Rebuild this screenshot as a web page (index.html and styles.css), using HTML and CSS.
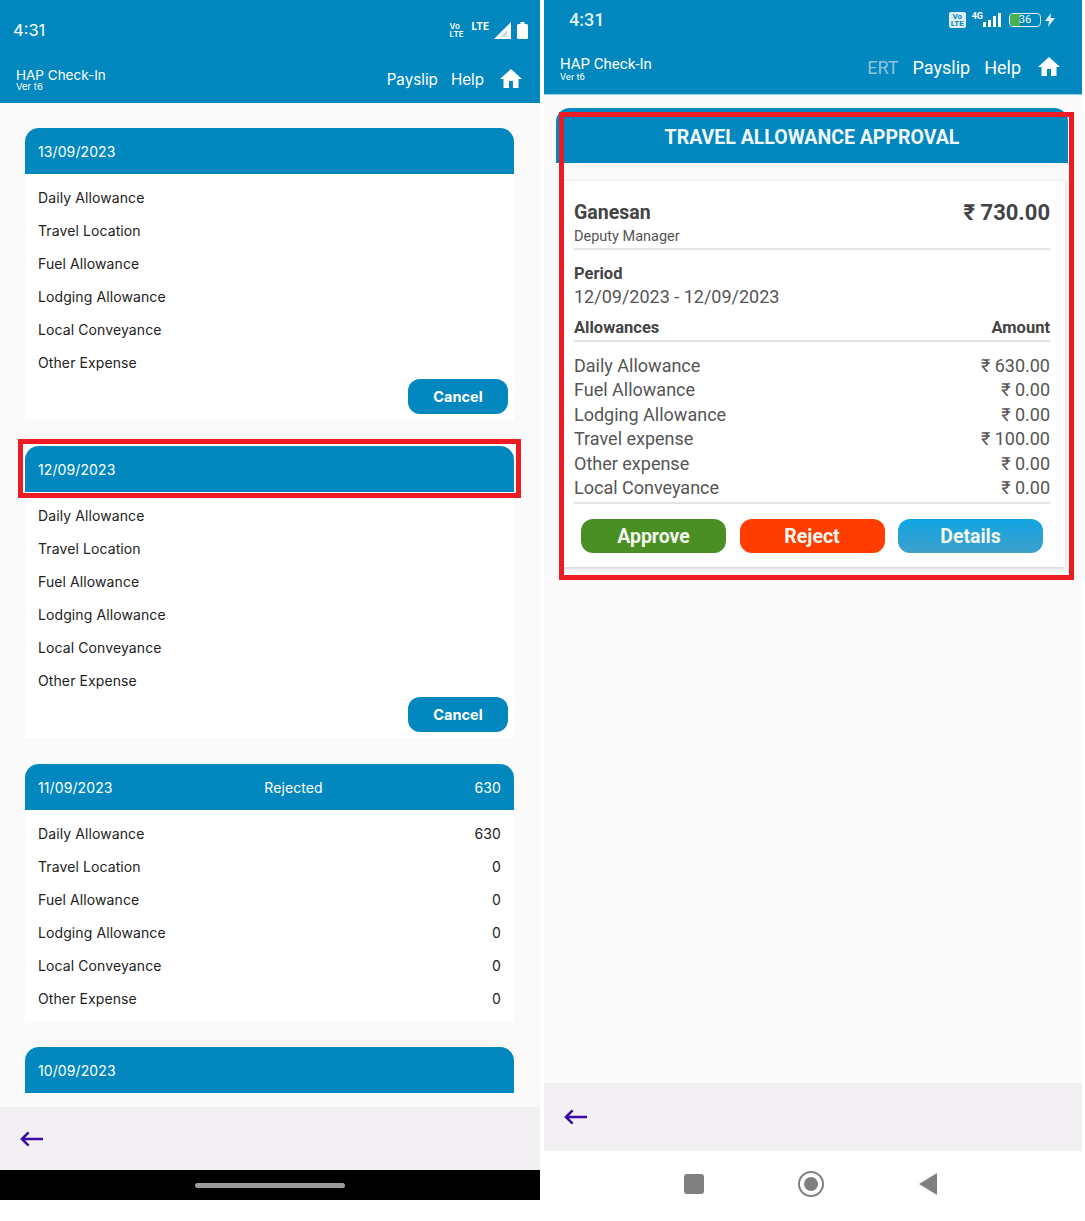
FILE: index.html
```html
<!DOCTYPE html>
<html lang="en">
<head>
    <meta charset="UTF-8">
    <title>HAP Check-In</title>
    <link rel="stylesheet" href="styles.css">
</head>
<body>
    <div class="screens">
        <!-- left phone: date list -->
        <section class="phone phone-list">
            <header class="topbar">
                <div class="status">
                    <span class="time">4:31</span>
                    <div class="status-icons">
                        <span class="volte">Vo<br>LTE</span>
                        <span class="lte">LTE</span>
                        <svg width="18" height="17" viewBox="0 0 18 17"><path d="M17 0v17H0z" fill="#fff"/><path d="M13 8v7H6z" fill="#0288be" opacity=".25"/></svg>
                        <svg class="batt" width="11" height="17" viewBox="0 0 11 17"><path d="M3.500 0h4v2h2a1.500 1.500 0 0 1 1.500 1.500v12a1.500 1.500 0 0 1-1.500 1.500h-8a1.500 1.500 0 0 1-1.500-1.500v-12a1.500 1.500 0 0 1 1.500-1.500h2z" fill="#fff"/></svg>
                    </div>
                </div>
                <div class="appbar">
                    <div class="brand">
                        <div class="brand-name">HAP Check-In</div>
                        <div class="brand-ver">Ver t6</div>
                    </div>
                    <nav class="links">
                        <a>Payslip</a>
                        <a>Help</a>
                        <svg class="home" viewBox="0 0 24 24"><path d="M10 21v-7h4v7h5.500v-9H23L12 2 1 12h3.500v9z" fill="#fff"/></svg>
                    </nav>
                </div>
            </header>

            <main class="list">
                <div class="day">
                    <div class="day-head"><span>13/09/2023</span></div>
                    <div class="day-body">
                        <div class="row"><span>Daily Allowance</span></div>
                        <div class="row"><span>Travel Location</span></div>
                        <div class="row"><span>Fuel Allowance</span></div>
                        <div class="row"><span>Lodging Allowance</span></div>
                        <div class="row"><span>Local Conveyance</span></div>
                        <div class="row"><span>Other Expense</span></div>
                        <div class="day-actions"><button class="btn-cancel">Cancel</button></div>
                    </div>
                </div>
                <div class="day">
                    <div class="day-head"><span>12/09/2023</span></div>
                    <div class="day-body">
                        <div class="row"><span>Daily Allowance</span></div>
                        <div class="row"><span>Travel Location</span></div>
                        <div class="row"><span>Fuel Allowance</span></div>
                        <div class="row"><span>Lodging Allowance</span></div>
                        <div class="row"><span>Local Conveyance</span></div>
                        <div class="row"><span>Other Expense</span></div>
                        <div class="day-actions"><button class="btn-cancel">Cancel</button></div>
                    </div>
                </div>
                <div class="day">
                    <div class="day-head day-head-split"><span>11/09/2023</span><span>Rejected</span><span>630</span></div>
                    <div class="day-body">
                        <div class="row"><span>Daily Allowance</span><span>630</span></div>
                        <div class="row"><span>Travel Location</span><span>0</span></div>
                        <div class="row"><span>Fuel Allowance</span><span>0</span></div>
                        <div class="row"><span>Lodging Allowance</span><span>0</span></div>
                        <div class="row"><span>Local Conveyance</span><span>0</span></div>
                        <div class="row"><span>Other Expense</span><span>0</span></div>
                    </div>
                </div>
                <div class="day">
                    <div class="day-head"><span>10/09/2023</span></div>
                </div>
            </main>

            <footer class="backbar">
                <svg class="back" viewBox="0 0 26 18"><path d="M25 9H3M10 2 3 9l7 7" fill="none" stroke="#3a0ca3" stroke-width="2.600"/></svg>
            </footer>
            <div class="gesture"><span class="gesture-pill"></span></div>
            <div class="mark mark-day"></div>
        </section>

        <!-- right phone: approval -->
        <section class="phone phone-approval">
            <header class="topbar">
                <div class="status">
                    <span class="time">4:31</span>
                    <div class="status-icons">
                        <span class="volte-box">Vo<br>LTE</span>
                        <span class="net">4G</span>
                        <svg width="20" height="14" viewBox="0 0 20 14"><path d="M0 9h3v5H0zM5 7h3v7H5zM10 3h3v11h-3zM15 0h3v14h-3z" fill="#fff"/></svg>
                        <span class="battery"><span class="battery-fill"></span><span class="battery-num">36</span></span>
                        <svg width="10" height="14" viewBox="0 0 10 14"><path d="M6 0 0 8h4l-1 6 7-9H5.500z" fill="#dff0f7"/></svg>
                    </div>
                </div>
                <div class="appbar">
                    <div class="brand">
                        <div class="brand-name">HAP Check-In</div>
                        <div class="brand-ver">Ver t6</div>
                    </div>
                    <nav class="links">
                        <a class="link-dim">ERT</a>
                        <a>Payslip</a>
                        <a>Help</a>
                        <svg class="home" viewBox="0 0 24 24"><path d="M10 21v-7h4v7h5.500v-9H23L12 2 1 12h3.500v9z" fill="#fff"/></svg>
                    </nav>
                </div>
            </header>

            <main class="approval">
                <div class="approval-title">TRAVEL ALLOWANCE APPROVAL</div>
                <div class="claim">
                    <div class="claim-top">
                        <div>
                            <div class="claim-name">Ganesan</div>
                            <div class="claim-role">Deputy Manager</div>
                        </div>
                        <div class="claim-total">₹ 730.00</div>
                    </div>
                    <div class="claim-period">
                        <div class="period-label">Period</div>
                        <div class="period-value">12/09/2023 - 12/09/2023</div>
                    </div>
                    <div class="claim-cols"><span>Allowances</span><span>Amount</span></div>
                    <div class="claim-rows">
                        <div class="claim-row"><span>Daily Allowance</span><span>₹ 630.00</span></div>
                        <div class="claim-row"><span>Fuel Allowance</span><span>₹ 0.00</span></div>
                        <div class="claim-row"><span>Lodging Allowance</span><span>₹ 0.00</span></div>
                        <div class="claim-row"><span>Travel expense</span><span>₹ 100.00</span></div>
                        <div class="claim-row"><span>Other expense</span><span>₹ 0.00</span></div>
                        <div class="claim-row"><span>Local Conveyance</span><span>₹ 0.00</span></div>
                    </div>
                    <div class="claim-actions">
                        <button class="btn btn-approve">Approve</button>
                        <button class="btn btn-reject">Reject</button>
                        <button class="btn btn-details">Details</button>
                    </div>
                </div>
            </main>

            <footer class="backbar">
                <svg class="back" viewBox="0 0 26 18"><path d="M25 9H3M10 2 3 9l7 7" fill="none" stroke="#3a0ca3" stroke-width="2.600"/></svg>
            </footer>
            <div class="softkeys">
                <span class="key-square"></span>
                <span class="key-circle"><span class="key-dot"></span></span>
                <svg width="20" height="24" viewBox="0 0 20 24"><path d="M19 1v22L1 12z" fill="#808080"/></svg>
            </div>
            <div class="mark mark-card"></div>
        </section>
    </div>
</body>
</html>
```

FILE: styles.css
```css
body {
    margin: 0;
    background-color: #fff;
}
.screens {
    display: flex;
    gap: 4px;
    height: 1221px;
    overflow: hidden;
}
.phone {
    position: relative;
    display: flex;
    flex-direction: column;
}
.phone-list {
    width: 540px;
    height: 1200px;
    font-family: "Inter", sans-serif;
}
.phone-approval {
    width: 538px;
    height: 1221px;
    font-family: "Roboto", sans-serif;
}
.topbar {
    background-color: #0288be;
    color: #fff;
    flex: none;
}
.phone-list .topbar {
    height: 103px;
}
.phone-approval .topbar {
    height: 94px;
    border-bottom: 1px solid #8fd0ea;
}
.status {
    display: flex;
    justify-content: space-between;
    align-items: center;
}
.phone-list .status {
    height: 60px;
    padding: 0 12px 0 13px;
}
.phone-approval .status {
    height: 39px;
    padding: 0 27px 0 25px;
}
.time {
    font-size: 16.500px;
}
.phone-approval .time {
    font-size: 18px;
    font-weight: 500;
    color: #dff0f7;
}
.status-icons {
    display: flex;
    align-items: center;
    gap: 5px;
}
.phone-approval .status-icons {
    gap: 4px;
}
.volte {
    font-size: 8px;
    line-height: 8px;
    font-weight: 600;
    margin-right: 3px;
}
.lte {
    font-size: 10px;
    font-weight: 700;
    margin: -8px 0 0 0;
}
.volte-box {
    background-color: #dff0f7;
    color: #0288be;
    font-size: 8px;
    line-height: 7px;
    font-weight: 700;
    padding: 1px 2px;
    border-radius: 2px;
    text-align: center;
    margin-right: 2px;
}
.net {
    font-size: 9px;
    font-weight: 700;
    margin: -8px -4px 0 0;
}
.battery {
    position: relative;
    width: 30px;
    height: 12px;
    border: 1px solid #dff0f7;
    border-radius: 4px;
    margin-left: 2px;
    overflow: hidden;
}
.battery-fill {
    display: block;
    width: 10px;
    height: 12px;
    background-color: #4caf50;
}
.battery-num {
    position: absolute;
    inset: 0;
    text-align: center;
    font-size: 11px;
    line-height: 12px;
}
.appbar {
    display: flex;
    justify-content: space-between;
    align-items: center;
    box-sizing: border-box;
}
.phone-list .appbar {
    padding: 0 17px 2px 16px;
    height: 40px;
}
.phone-list .brand {
    margin-top: 2px;
}
.brand-name {
    font-size: 13.500px;
    line-height: 14px;
}
.phone-approval .appbar {
    padding: 6px 21px 0 16px;
    height: 50px;
}
.phone-approval .brand {
    margin-top: 4px;
}
.phone-approval .brand-name {
    font-size: 15px;
    line-height: 15px;
}
.brand-ver {
    font-size: 9.500px;
    line-height: 10px;
}
.links {
    display: flex;
    align-items: center;
    gap: 13px;
    font-size: 15.200px;
}
.phone-approval .links {
    gap: 14px;
    font-size: 18px;
}
.link-dim {
    color: #8fc4dc;
}
.home {
    width: 24px;
    height: 24px;
    margin-left: 2px;
}

/* date list */
.list {
    flex: 1;
    background-color: #fafafa;
    padding: 25px 26px 0 25px;
    overflow: hidden;
    display: flex;
    flex-direction: column;
    gap: 26px;
    letter-spacing: 0.1px;
}
.day-head {
    height: 46px;
    padding: 0 13px;
    display: flex;
    align-items: center;
    background-color: #0288be;
    color: #fff;
    font-size: 14px;
    border-radius: 14px 14px 0 0;
}
.day-head-split {
    justify-content: space-between;
}
.day-body {
    background-color: #fff;
    padding: 7px 13px 6px;
    font-size: 14px;
    color: #222;
}
.row {
    height: 33px;
    display: flex;
    justify-content: space-between;
    align-items: center;
}
.day-actions {
    display: flex;
    justify-content: flex-end;
    margin: 0 -7px 0 0;
}
.btn-cancel {
    width: 100px;
    height: 35px;
    border: none;
    border-radius: 12px;
    background-color: #0288be;
    color: #fff;
    font-family: "Inter", sans-serif;
    font-size: 14.500px;
    font-weight: 700;
}
.backbar {
    flex: none;
    background-color: #f2f0f2;
    display: flex;
    align-items: center;
}
.phone-list .backbar {
    height: 63px;
    padding-left: 19px;
}
.phone-approval .backbar {
    height: 68px;
    padding-left: 19px;
}
.back {
    width: 25px;
    height: 18px;
}
.gesture {
    flex: none;
    height: 30px;
    background-color: #000;
    display: flex;
    align-items: center;
    justify-content: center;
}
.gesture-pill {
    width: 150px;
    height: 5px;
    border-radius: 3px;
    background-color: #9b9b9b;
}

/* approval card */
.approval {
    flex: 1;
    background-color: #fafafa;
    padding: 13px 14px 0 12px;
}
.approval-title {
    height: 55px;
    padding-top: 3px;
    box-sizing: border-box;
    background-color: #0288be;
    border-radius: 14px 14px 0 0;
    color: #f2f8fb;
    font-size: 19.500px;
    font-weight: 700;
    display: flex;
    align-items: center;
    justify-content: center;
}
.claim {
    margin: 18px 3px 0 8px;
    padding: 19px 15px 0 10px;
    height: 367px;
    background-color: #fff;
    box-shadow: 0 1px 4px rgba(0, 0, 0, 0.2);
    color: #555;
}
.claim-top {
    display: flex;
    justify-content: space-between;
    border-bottom: 2px solid #e4e4e4;
}
.claim-name {
    font-size: 19.500px;
    line-height: 26px;
    font-weight: 700;
    color: #444;
}
.claim-role {
    font-size: 14.500px;
    line-height: 22px;
}
.claim-total {
    font-size: 22px;
    line-height: 26px;
    font-weight: 700;
    color: #444;
}
.claim-period {
    padding-top: 13px;
}
.period-label {
    font-size: 16.500px;
    line-height: 22px;
    font-weight: 700;
    color: #444;
}
.period-value {
    font-size: 18px;
    line-height: 24px;
}
.claim-cols {
    display: flex;
    justify-content: space-between;
    margin-top: 7px;
    border-bottom: 2px solid #e4e4e4;
    font-size: 16.500px;
    line-height: 24px;
    font-weight: 700;
    color: #444;
}
.claim-rows {
    padding: 12px 0 2px;
    border-bottom: 2px solid #e4e4e4;
}
.claim-row {
    display: flex;
    justify-content: space-between;
    font-size: 18px;
    line-height: 24.400px;
}
.claim-actions {
    display: flex;
    justify-content: space-between;
    padding: 15px 7px 0;
}
.btn {
    width: 145px;
    height: 34px;
    border: none;
    border-radius: 12px;
    color: #f4f7ee;
    font-family: "Roboto", sans-serif;
    font-size: 19.500px;
    font-weight: 700;
}
.btn-approve {
    background-color: #4a8f24;
}
.btn-reject {
    background-color: #ff3d00;
}
.btn-details {
    background: linear-gradient(#0fa5e2, #3f9fcb);
}
.softkeys {
    flex: none;
    height: 70px;
    box-sizing: border-box;
    background-color: #fff;
    display: flex;
    align-items: center;
    justify-content: center;
    gap: 94px;
    padding: 0 4px 4px 0;
}
.key-square {
    width: 20px;
    height: 20px;
    border-radius: 3px;
    background-color: #808080;
}
.key-circle {
    width: 26px;
    height: 26px;
    box-sizing: border-box;
    border: 2px solid #808080;
    border-radius: 50%;
    display: flex;
    align-items: center;
    justify-content: center;
}
.key-dot {
    width: 14px;
    height: 14px;
    border-radius: 50%;
    background-color: #808080;
}

/* red markers drawn over the screenshot */
.mark {
    position: absolute;
    box-sizing: border-box;
    border: 5px solid #ed1c24;
}
.mark-day {
    left: 18px;
    top: 439px;
    width: 503px;
    height: 59px;
}
.mark-card {
    left: 15px;
    top: 112px;
    width: 515px;
    height: 468px;
}
```
